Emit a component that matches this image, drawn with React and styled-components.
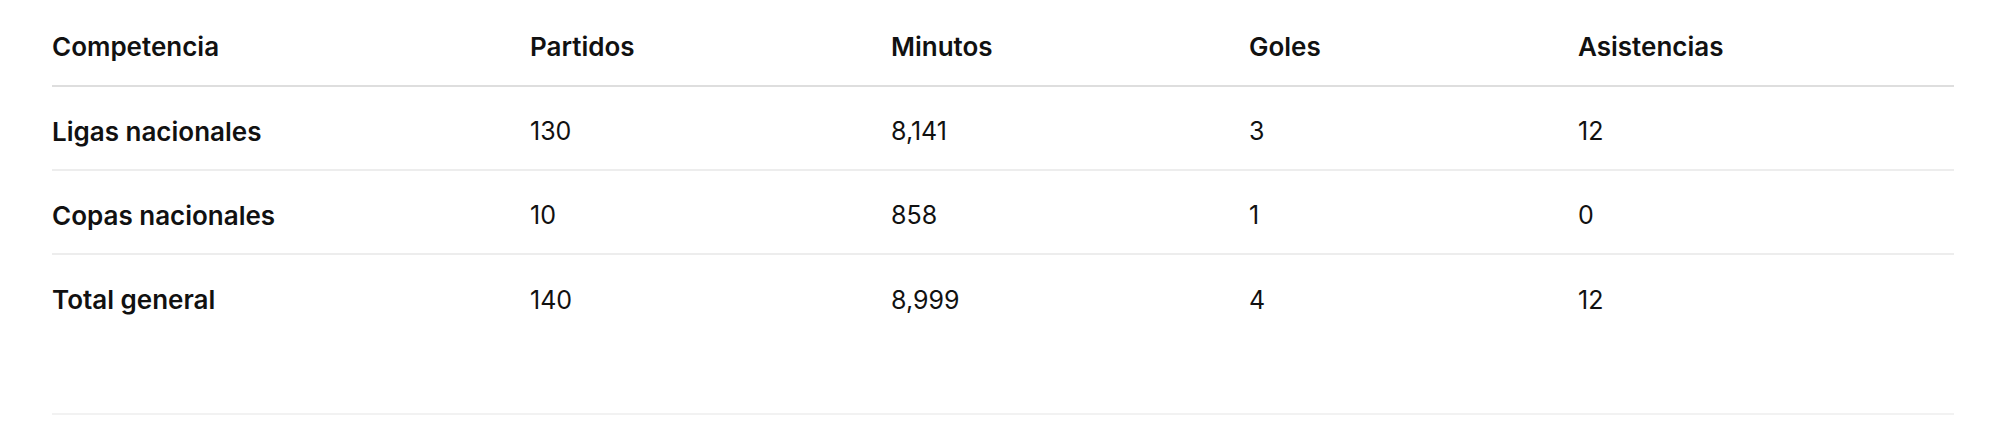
import React from "react";
import styled, { createGlobalStyle } from "styled-components";

const rows = [
  { name: "Ligas nacionales", partidos: "130", minutos: "8,141", goles: "3", asistencias: "12" },
  { name: "Copas nacionales", partidos: "10", minutos: "858", goles: "1", asistencias: "0" },
  { name: "Total general", partidos: "140", minutos: "8,999", goles: "4", asistencias: "12" },
];

const App = () => {
  return (
    <>
      <GlobalStyle />
      <Wrapper>
        <Table>
          <colgroup>
            <col style={{ width: 478 }} />
            <col style={{ width: 361 }} />
            <col style={{ width: 358 }} />
            <col style={{ width: 329 }} />
            <col />
          </colgroup>
          <thead>
            <tr>
              <HeadCell>Competencia</HeadCell>
              <HeadCell>Partidos</HeadCell>
              <HeadCell>Minutos</HeadCell>
              <HeadCell>Goles</HeadCell>
              <HeadCell>Asistencias</HeadCell>
            </tr>
          </thead>
          <tbody>
            {rows.map((r, i) => (
              <Row key={r.name} $last={i === rows.length - 1}>
                <NameCell>{r.name}</NameCell>
                <Cell>{r.partidos}</Cell>
                <Cell>{r.minutos}</Cell>
                <Cell>{r.goles}</Cell>
                <Cell>{r.asistencias}</Cell>
              </Row>
            ))}
          </tbody>
        </Table>
      </Wrapper>
    </>
  );
};

export default App;

const GlobalStyle = createGlobalStyle`
  body {
    margin: 0;
    background: #fff;
    font-family: Inter, "Liberation Sans", sans-serif;
    color: #111;
  }
`;

const Wrapper = styled.div`
  padding: 2px 50px 0 52px;
`;

const Table = styled.table`
  width: 100%;
  border-collapse: collapse;
  table-layout: fixed;
  border-bottom: 2px solid #f2f2f2;

  tbody::after {
    content: "";
    display: table-row;
    height: 76px;
  }
`;

const HeadCell = styled.th`
  box-sizing: border-box;
  height: 84px;
  padding: 5px 0 0;
  text-align: left;
  vertical-align: middle;
  font-size: 26px;
  font-weight: 600;
  border-bottom: 2px solid #dedede;
`;

const Row = styled.tr`
  border-bottom: ${(p) => (p.$last ? "none" : "2px solid #ededed")};
`;

const Cell = styled.td`
  box-sizing: border-box;
  height: 84px;
  padding: 6px 0 0;
  vertical-align: middle;
  font-size: 25px;
  font-weight: 400;
`;

const NameCell = styled(Cell)`
  font-size: 26px;
  font-weight: 600;
`;
